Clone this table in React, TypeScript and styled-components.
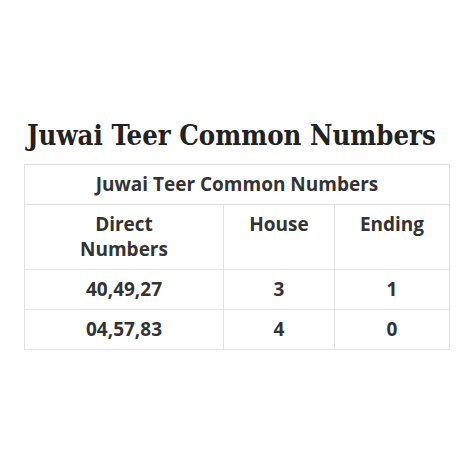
import React from "react";
import styled, { createGlobalStyle } from "styled-components";

const GlobalStyle = createGlobalStyle`
  html, body {
    margin: 0;
    padding: 0;
    background: #fff;
  }
`;

const Page = styled.div`
  padding: 116px 24px 0 24px;
  width: 474px;
  box-sizing: border-box;
`;

const Heading = styled.h2`
  margin: 0 0 10px 0;
  padding-left: 3px;
  font-family: "DejaVu Serif Condensed", "DejaVu Serif", serif;
  font-stretch: condensed;
  font-weight: bold;
  font-size: 27.3px;
  line-height: 38px;
  color: #222;
  white-space: nowrap;
`;

const Table = styled.table`
  width: 426px;
  border-collapse: collapse;
  font-family: "Open Sans", "Noto Sans", sans-serif;
  font-size: 19px;
  color: #333;
`;

const Cell = styled.td<{ $w?: number }>`
  border: 1px solid #e3e3e3;
  padding: 7px 8px;
  line-height: 25px;
  text-align: center;
  vertical-align: top;
  font-weight: 700;
  ${(p) => (p.$w ? `width: ${p.$w}px;` : "")}
`;

const rows = [
  ["40,49,27", "3", "1"],
  ["04,57,83", "4", "0"],
];

const App = () => {
  return (
    <Page>
      <GlobalStyle />
      <Heading>Juwai Teer Common Numbers</Heading>
      <Table>
        <tbody>
          <tr>
            <Cell colSpan={3}>Juwai Teer Common Numbers</Cell>
          </tr>
          <tr>
            <Cell $w={182}>
              Direct
              <br />
              Numbers
            </Cell>
            <Cell $w={94}>House</Cell>
            <Cell>Ending</Cell>
          </tr>
          {rows.map((r) => (
            <tr key={r[0]}>
              <Cell>{r[0]}</Cell>
              <Cell>{r[1]}</Cell>
              <Cell>{r[2]}</Cell>
            </tr>
          ))}
        </tbody>
      </Table>
    </Page>
  );
};

export default App;
